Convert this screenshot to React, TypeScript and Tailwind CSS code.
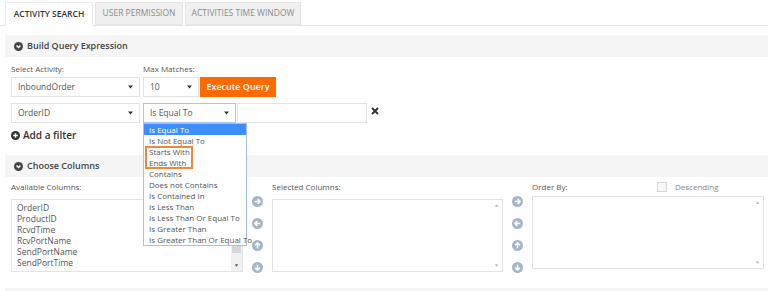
import React from 'react';

const font = { fontFamily: '"Open Sans", "Liberation Sans", sans-serif' };

const Caret = () => (
  <svg width="5" height="4" viewBox="0 0 5 4" className="shrink-0">
    <path d="M0 0.5 L5 0.5 L2.5 3.5 Z" fill="#333" />
  </svg>
);

const ChevronCircle = () => (
  <svg width="9" height="9" viewBox="0 0 10 10" className="shrink-0">
    <circle cx="5" cy="5" r="5" fill="#444" />
    <path d="M2.8 4 L5 6.2 L7.2 4" stroke="#fff" strokeWidth="1.6" fill="none" />
  </svg>
);

const PlusCircle = () => (
  <svg width="9" height="9" viewBox="0 0 10 10" className="shrink-0">
    <circle cx="5" cy="5" r="5" fill="#333" />
    <path d="M5 2.4 V7.6 M2.4 5 H7.6" stroke="#fff" strokeWidth="1.6" />
  </svg>
);

const ArrowCircle = ({ dir }: { dir: 'right' | 'left' | 'up' | 'down' }) => {
  const rot = { right: 0, down: 90, left: 180, up: 270 }[dir];
  return (
    <svg width="11" height="11" viewBox="0 0 12 12">
      <circle cx="6" cy="6" r="6" fill="#a6b6c8" />
      <g transform={`rotate(${rot} 6 6)`}>
        <path d="M3 6 H8.6 M6.2 3.4 L8.8 6 L6.2 8.6" stroke="#fff" strokeWidth="1.7" fill="none" />
      </g>
    </svg>
  );
};

const Select = ({ value, w, focus }: { value: string; w: string; focus?: boolean }) => (
  <div
    className={`${w} h-[20px] flex items-center justify-between pl-[6px] pr-[6px] bg-white border text-[8.5px] text-[#555] ${
      focus ? 'border-[#a9c6ee]' : 'border-[#e3e3e3]'
    }`}
  >
    <span>{value}</span>
    <Caret />
  </div>
);

const Section = ({ title }: { title: string }) => (
  <div className="ml-[5px] h-[22px] bg-[#f5f5f5] flex items-center gap-[4px] pl-[9px]">
    <ChevronCircle />
    <span className="text-[9px] font-semibold text-[#444]">{title}</span>
  </div>
);

const ops = [
  'Is Equal To',
  'Is Not Equal To',
  'Starts With',
  'Ends With',
  'Contains',
  'Does not Contains',
  'Is Contained In',
  'Is Less Than',
  'Is Less Than Or Equal To',
  'Is Greater Than',
  'Is Greater Than Or Equal To',
];

const columns = ['OrderID', 'ProductID', 'RcvdTime', 'RcvPortName', 'SendPortName', 'SendPortTime'];

const ListBox = ({ items, w, h }: { items: string[]; w: string; h: string }) => {
  const filled = items.length > 0;
  return (
    <div className={`${w} ${h} relative border border-[#e3e3e3] bg-white flex`}>
      <div className="flex-1 pt-[2px] pl-[5px]">
        {items.map((c) => (
          <div key={c} className="h-[11px] leading-[11px] text-[8.5px] text-[#555]">
            {c}
          </div>
        ))}
      </div>
      <div
        className={`w-[11px] flex flex-col justify-between items-center py-[3px] text-[5px] leading-none ${
          filled ? 'bg-[#f1f1f1] text-[#555]' : 'text-[#bbb]'
        }`}
      >
        <span>▲</span>
        {filled && <span className="w-[9px] flex-1 my-[2px] bg-[#d6d6d6]" />}
        {filled && <span className="h-[8px]" />}
        <span>▼</span>
      </div>
    </div>
  );
};

const ArrowColumn = () => (
  <div className="w-[29px] flex flex-col items-center gap-[11px] pt-[15px]">
    <ArrowCircle dir="right" />
    <ArrowCircle dir="left" />
    <ArrowCircle dir="up" />
    <ArrowCircle dir="down" />
  </div>
);

export default function App() {
  return (
    <div className="w-[768px] h-[291px] overflow-hidden bg-white" style={font}>
      {/* tabs */}
      <div className="flex gap-[2px] pl-[5px] pt-[2px] border-b border-[#e4e4e4] h-[26px]">
        <div className="w-[88px] h-[24px] -mb-px bg-white border border-[#ececec] border-b-white flex items-center justify-center text-[8.5px] font-semibold text-[#333]">
          ACTIVITY SEARCH
        </div>
        <div className="w-[88px] h-[23px] bg-[#f0f0f0] border border-[#e6e6e6] flex items-center justify-center text-[8.5px] text-[#8a8a8a]">
          USER PERMISSION
        </div>
        <div className="w-[116px] h-[23px] bg-[#f0f0f0] border border-[#e6e6e6] flex items-center justify-center text-[8.5px] text-[#8a8a8a]">
          ACTIVITIES TIME WINDOW
        </div>
      </div>

      <div className="mt-[9px]">
        <Section title="Build Query Expression" />
      </div>

      <div className="pl-[11px]">
        <div className="mt-[5px] h-[13px] flex text-[8px] leading-[13px] text-[#555]">
          <div className="w-[132px]">Select Activity:</div>
          <div>Max Matches:</div>
        </div>
        <div className="mt-[2px] flex items-center">
          <Select value="InboundOrder" w="w-[129px]" />
          <div className="ml-[3px]">
            <Select value="10" w="w-[56px]" />
          </div>
          <div className="ml-[1px] w-[76px] h-[20px] bg-[#ff6a00] text-white text-[9px] font-semibold flex items-center justify-center">
            Execute Query
          </div>
        </div>
        <div className="mt-[6px] flex items-center">
          <Select value="OrderID" w="w-[129px]" />
          <div className="ml-[3px] relative">
            <Select value="Is Equal To" w="w-[93px]" focus />
            <div className="absolute left-0 top-[20px] w-[104px] border border-[#a9c0e8] bg-white z-10">
              {ops.map((o, i) => (
                <div
                  key={o}
                  className={`h-[11px] leading-[11px] pl-[5px] text-[8px] whitespace-nowrap ${
                    i === 0 ? 'bg-[#3d8ef8] text-white' : 'text-[#555]'
                  }`}
                >
                  {o}
                </div>
              ))}
              <div className="absolute left-[1px] top-[22px] w-[48px] h-[23px] border-[2px] border-[#f0883a]" />
            </div>
          </div>
          <div className="ml-[1px] w-[130px] h-[20px] border border-[#e3e3e3] bg-white" />
          <svg width="8" height="8" viewBox="0 0 8 8" className="ml-[4px] -mt-[4px]">
            <path d="M1 1 L7 7 M7 1 L1 7" stroke="#333" strokeWidth="2" />
          </svg>
        </div>
        <div className="mt-[6px] h-[12px] flex items-center gap-[3px]">
          <PlusCircle />
          <span className="text-[10px] font-semibold text-[#333]">Add a filter</span>
        </div>
      </div>

      <div className="mt-[14px]">
        <Section title="Choose Columns" />
      </div>

      <div className="pl-[11px] pt-[4px] flex">
        <div className="w-[232px]">
          <div className="h-[12px] text-[8px] leading-[12px] text-[#555]">Available Columns:</div>
          <div className="mt-[6px]">
            <ListBox items={columns} w="w-[232px]" h="h-[73px]" />
          </div>
        </div>
        <ArrowColumn />
        <div className="w-[231px]">
          <div className="h-[12px] text-[8px] leading-[12px] text-[#555]">Selected Columns:</div>
          <div className="mt-[6px]">
            <ListBox items={[]} w="w-[231px]" h="h-[73px]" />
          </div>
        </div>
        <ArrowColumn />
        <div className="w-[232px]">
          <div className="h-[12px] flex items-center text-[8px] text-[#555]">
            <span className="w-[125px]">Order By:</span>
            <span className="w-[10px] h-[10px] border border-[#d6d6d6] bg-[#f7f7f7]" />
            <span className="ml-[8px] text-[#888]">Descending</span>
          </div>
          <div className="mt-[3px]">
            <ListBox items={[]} w="w-[232px]" h="h-[73px]" />
          </div>
        </div>
      </div>

      <div className="mt-[15px]">
        <div className="ml-[5px] h-[22px] bg-[#f5f5f5]" />
      </div>
    </div>
  );
}
